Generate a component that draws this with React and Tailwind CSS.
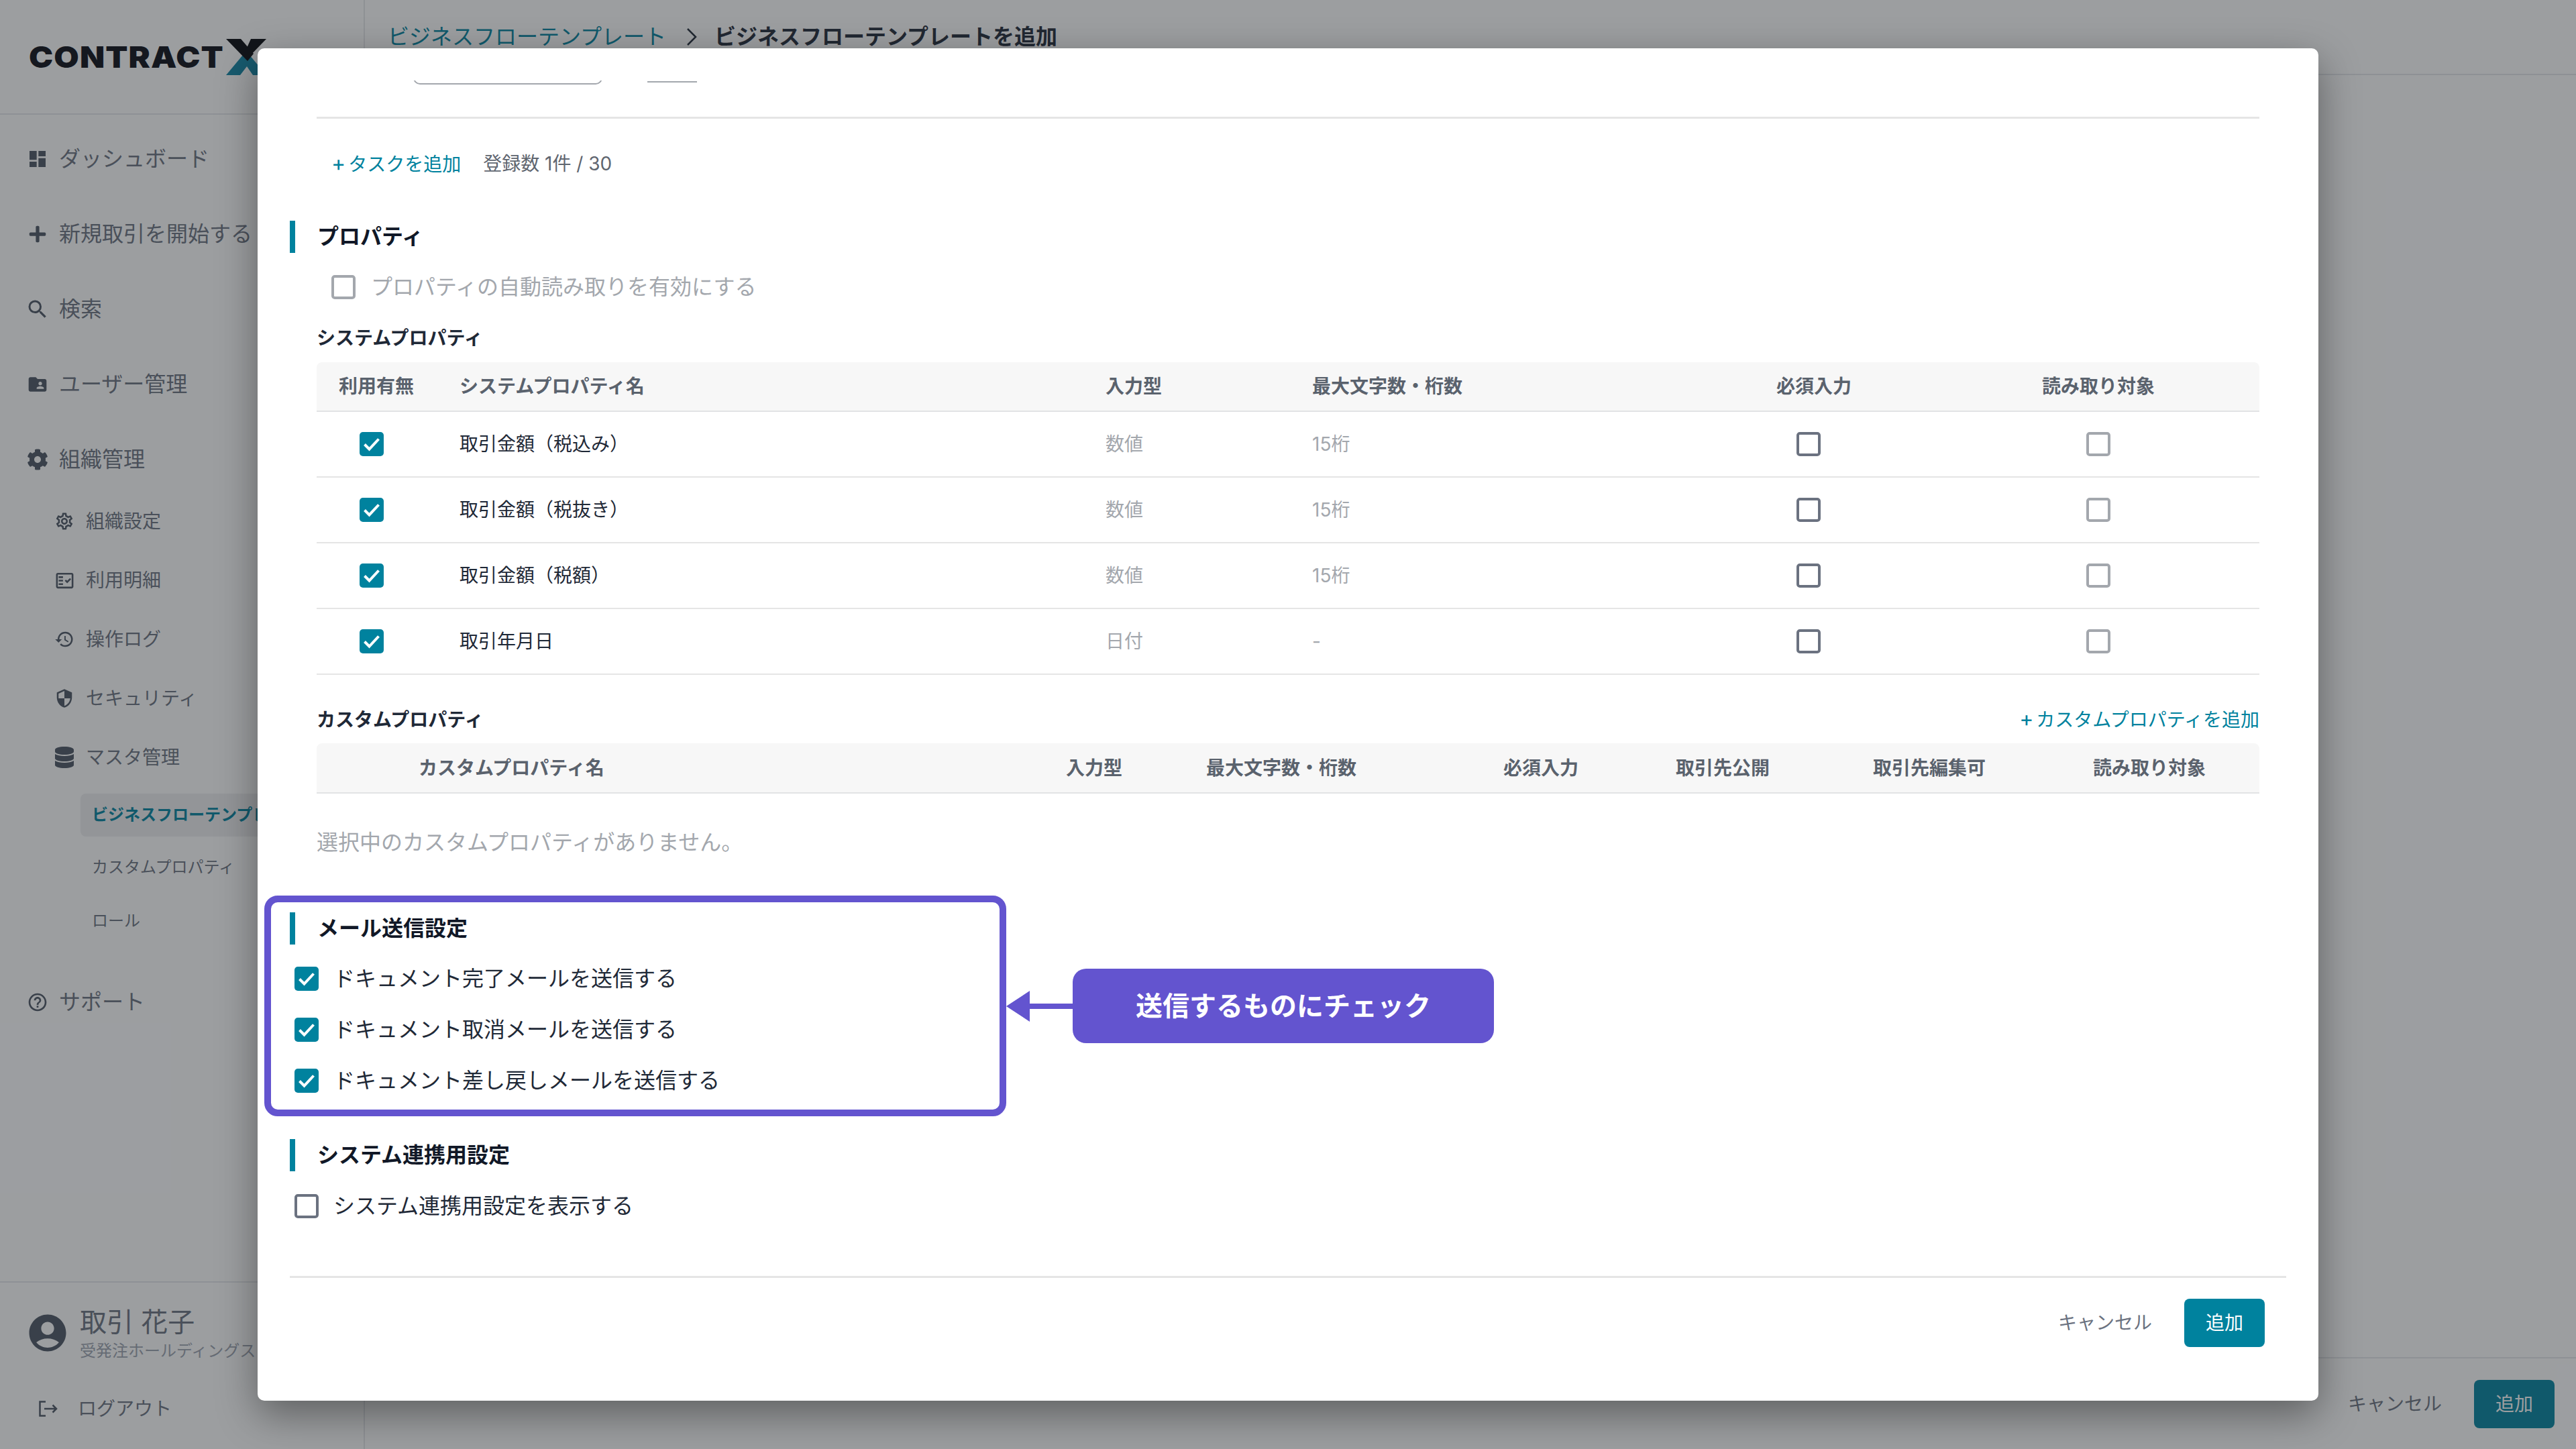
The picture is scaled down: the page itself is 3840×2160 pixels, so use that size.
import React from "react";
import { MdDashboard, MdSearch, MdFolderShared, MdOutlineSettings, MdOutlineFactCheck, MdHistory, MdSecurity, MdHelpOutline, MdAccountCircle } from "react-icons/md";
import { FaPlus, FaCog, FaDatabase } from "react-icons/fa";

function Check({ on, light, className = "" }) {
  if (on) {
    return (
      <div className={"w-[36px] h-[36px] shrink-0 rounded-[5px] bg-[#00829e] flex items-center justify-center " + className}>
        <svg width="36" height="36" viewBox="0 0 36 36" fill="none">
          <path d="M7.5 18.5 L14.5 25.5 L28.5 10.5" stroke="#fff" strokeWidth="4" />
        </svg>
      </div>
    );
  }
  return (
    <div className={"w-[36px] h-[36px] shrink-0 rounded-[5px] border-[4px] bg-white " + (light ? "border-[#a3a7ad] " : "border-[#6b7280] ") + className} />
  );
}

function SectionTitle({ children, className = "" }) {
  return (
    <div className={"flex h-[48px] items-center ml-[48px] " + className}>
      <div className="w-[8px] h-[48px] bg-[#00829e]" />
      <div className="ml-[33px] text-[32px] font-bold text-[#111827] leading-none">{children}</div>
    </div>
  );
}

function Plus() {
  return <span className="text-[32px] leading-none mr-[4px]">+</span>;
}

const topItems = [
  { t: "ダッシュボード", i: <MdDashboard size={32} /> },
  { t: "新規取引を開始する", i: <FaPlus size={28} /> },
  { t: "検索", i: <MdSearch size={36} /> },
  { t: "ユーザー管理", i: <MdFolderShared size={32} /> },
];
const subItems = [
  { t: "組織設定", i: <MdOutlineSettings size={30} /> },
  { t: "利用明細", i: <MdOutlineFactCheck size={31} /> },
  { t: "操作ログ", i: <MdHistory size={30} /> },
  { t: "セキュリティ", i: <MdSecurity size={30} /> },
  { t: "マスタ管理", i: <FaDatabase size={32} /> },
];

function Sidebar() {
  return (
    <aside className="w-[544px] h-full shrink-0 flex flex-col border-r-2 border-[#e5e7eb]">
      <div className="h-[171px] shrink-0 border-b-2 border-[#e5e7eb] flex items-center pl-[43px]">
        <span className="w-[294px] text-[44px] font-black tracking-[1px] text-[#0a0c14] leading-none origin-left scale-x-[1.1] whitespace-nowrap [font-family:Inter,sans-serif]">CONTRACT</span>
        <svg width="60" height="54" viewBox="0 0 60 54" className="shrink-0">
          <polygon points="0,54 30,18 60,54 40,54 31,41 21,54" fill="#0f84a4" />
          <polygon points="0,0 22,0 41,22 32,33" fill="#05060c" />
          <polygon points="37,0 60,0 32,29 27,22" fill="#05060c" />
        </svg>
      </div>
      <nav className="flex-1 flex flex-col pt-[10px] text-[#6b7280]">
        {topItems.map((it) => (
          <div key={it.t} className="h-[112px] flex items-center text-[32px]">
            <div className="w-[88px] flex justify-center pl-[24px] text-[#4b5563]">{it.i}</div>
            <span className="whitespace-nowrap">{it.t}</span>
          </div>
        ))}
        <div className="mt-[8px] h-[96px] flex items-center text-[32px]">
          <div className="w-[88px] flex justify-center pl-[24px] text-[#4b5563]"><FaCog size={32} /></div>
          <span>組織管理</span>
        </div>
        {subItems.map((it) => (
          <div key={it.t} className="h-[88px] flex items-center text-[28px]">
            <div className="w-[128px] flex justify-center pl-[64px] text-[#4b5563]">{it.i}</div>
            <span className="whitespace-nowrap">{it.t}</span>
          </div>
        ))}
        <div className="mt-[10px] ml-[120px] mr-[24px] h-[64px] rounded-[8px] bg-[#eeeff1] flex items-center pl-[17px] text-[24px] font-bold text-[#00829e] whitespace-nowrap overflow-hidden">ビジネスフローテンプレート</div>
        <div className="mt-[6px] h-[80px] flex items-center pl-[137px] text-[24px]">カスタムプロパティ</div>
        <div className="h-[80px] flex items-center pl-[137px] text-[24px]">ロール</div>
        <div className="mt-[25px] h-[112px] flex items-center text-[32px]">
          <div className="w-[88px] flex justify-center pl-[24px] text-[#4b5563]"><MdHelpOutline size={32} /></div>
          <span>サポート</span>
        </div>
      </nav>
      <div className="h-[250px] shrink-0 border-t-2 border-[#e5e7eb] flex flex-col">
        <div className="mt-[33px] flex items-center pl-[38px]">
          <MdAccountCircle size={66} className="text-[#4b5563]" />
          <div className="ml-[15px] flex flex-col">
            <span className="text-[40px] leading-[52px] text-[#6b7280] whitespace-nowrap">取引 花子</span>
            <span className="text-[24px] leading-[30px] mt-[2px] text-[#9ca3af] whitespace-nowrap">受発注ホールディングス</span>
          </div>
        </div>
        <div className="mt-[50px] flex items-center pl-[58px]">
          <svg width="28" height="24" viewBox="0 0 28 24" fill="none" stroke="#4b5563" strokeWidth="2.5" className="shrink-0">
            <path d="M10 1.5 H1.5 V22.5 H10" />
            <path d="M8 12 H26 M20.5 6.5 L26 12 L20.5 17.5" />
          </svg>
          <span className="ml-[30px] text-[28px] text-[#6b7280]">ログアウト</span>
        </div>
      </div>
    </aside>
  );
}

function Main() {
  return (
    <main className="flex-1 h-full flex flex-col">
      <header className="h-[112px] shrink-0 border-b-2 border-[#e5e7eb] flex items-center pl-[34px] text-[32px]">
        <span className="text-[#00829e]">ビジネスフローテンプレート</span>
        <svg width="16" height="26" viewBox="0 0 16 26" fill="none" className="ml-[30px] mr-[26px]">
          <path d="M2 1 L14 13 L2 25" stroke="#1f2937" strokeWidth="2.5" />
        </svg>
        <span className="font-bold text-[#1f2937]">ビジネスフローテンプレートを追加</span>
      </header>
      <div className="flex-1" />
      <footer className="h-[137px] shrink-0 border-t-2 border-[#e5e7eb] flex items-center justify-end pr-[32px] text-[28px]">
        <span className="text-[#6b7280] mr-[48px]">キャンセル</span>
        <div className="w-[120px] h-[72px] rounded-[8px] bg-[#00829e] text-white flex items-center justify-center">追加</div>
      </footer>
    </main>
  );
}

const sysRows = [
  ["取引金額（税込み）", "数値", "15桁"],
  ["取引金額（税抜き）", "数値", "15桁"],
  ["取引金額（税額）", "数値", "15桁"],
  ["取引年月日", "日付", "-"],
];

function SystemTable() {
  return (
    <div className="text-[28px] mt-[16px]">
      <div className="h-[74px] rounded-t-[8px] bg-[#f7f7f7] border-b-2 border-[#e2e3e5] grid grid-cols-[213px_963px_308px_644px_288px_480px] items-center font-bold text-[#5a626d]">
        <span className="pl-[33px]">利用有無</span>
        <span>システムプロパティ名</span>
        <span>入力型</span>
        <span>最大文字数・桁数</span>
        <span className="pl-[48px]">必須入力</span>
        <span className="text-center">読み取り対象</span>
      </div>
      {sysRows.map((r) => (
        <div key={r[0]} className="h-[98px] border-b-2 border-[#e5e5e5] grid grid-cols-[213px_963px_308px_644px_288px_480px] items-center">
          <Check on className="ml-[64px]" />
          <span className="text-[#1f2937]">{r[0]}</span>
          <span className="text-[#a3a7ad]">{r[1]}</span>
          <span className="text-[#a3a7ad]">{r[2]}</span>
          <Check className="ml-[78px]" />
          <Check light className="justify-self-center" />
        </div>
      ))}
    </div>
  );
}

function Modal() {
  return (
    <div className="absolute left-[384px] top-[72px] w-[3072px] h-[2016px] bg-white rounded-[10px] overflow-hidden shadow-[0_20px_60px_rgba(0,0,0,0.4)]">
      <div className="h-[54px] pt-[48px] pl-[232px]">
        <div className="h-[6px] flex items-end overflow-hidden">
          <div className="w-[282px] h-[40px] rounded-[10px] border-2 border-[#a3a7ad] shrink-0" />
          <div className="ml-[67px] mb-[3px] w-[74px] h-[2px] bg-[#a3a7ad]" />
        </div>
      </div>
      <div className="mx-[88px] mt-[48px] h-[3px] bg-[#e5e5e5]" />
      <div className="h-[40px] mt-[47px] ml-[110px] flex items-center text-[28px] leading-none">
        <span className="text-[#00829e]"><Plus />タスクを追加</span>
        <span className="ml-[33px] text-[#5f6670]">登録数 1件 / 30</span>
      </div>
      <SectionTitle className="mt-[65px]">プロパティ</SectionTitle>
      <div className="mt-[33px] ml-[110px] flex items-center h-[36px]">
        <Check light />
        <span className="ml-[23px] text-[32px] text-[#a3a7ad] leading-none">プロパティの自動読み取りを有効にする</span>
      </div>
      <div className="mx-[88px]">
        <div className="mt-[38px] h-[40px] flex items-center text-[28px] font-bold text-[#1f2937]">システムプロパティ</div>
        <SystemTable />
        <div className="mt-[47px] h-[40px] flex items-center justify-between text-[28px]">
          <span className="font-bold text-[#1f2937]">カスタムプロパティ</span>
          <span className="text-[#00829e]"><Plus />カスタムプロパティを追加</span>
        </div>
        <div className="mt-[15px] h-[75px] rounded-t-[8px] bg-[#f7f7f7] border-b-2 border-[#e2e3e5] pl-[152px] grid grid-cols-[965px_209px_443px_257px_294px_328px_1fr] items-center text-[28px] font-bold text-[#5a626d]">
          <span>カスタムプロパティ名</span>
          <span>入力型</span>
          <span>最大文字数・桁数</span>
          <span>必須入力</span>
          <span>取引先公開</span>
          <span>取引先編集可</span>
          <span>読み取り対象</span>
        </div>
        <div className="mt-[49px] h-[48px] flex items-center text-[32px] text-[#a3a7ad]">選択中のカスタムプロパティがありません。</div>
      </div>
      <SectionTitle className="mt-[80px]">メール送信設定</SectionTitle>
      <div className="mt-[33px] ml-[55px] flex flex-col gap-[40px]">
        {["ドキュメント完了メールを送信する", "ドキュメント取消メールを送信する", "ドキュメント差し戻しメールを送信する"].map((t) => (
          <div key={t} className="h-[36px] flex items-center">
            <Check on />
            <span className="ml-[22px] text-[32px] text-[#1f2937] leading-none">{t}</span>
          </div>
        ))}
      </div>
      <SectionTitle className="mt-[69px]">システム連携用設定</SectionTitle>
      <div className="mt-[34px] ml-[55px] h-[36px] flex items-center">
        <Check />
        <span className="ml-[22px] text-[32px] text-[#1f2937] leading-none">システム連携用設定を表示する</span>
      </div>
      <div className="mt-[86px] mx-[48px] border-t-[3px] border-[#e5e5e5] pt-[31px] pr-[32px] flex items-center justify-end text-[28px]">
        <span className="text-[#6b7280] mr-[48px]">キャンセル</span>
        <div className="w-[120px] h-[72px] rounded-[8px] bg-[#00829e] text-white flex items-center justify-center">追加</div>
      </div>
    </div>
  );
}

function Annotation() {
  return (
    <>
      <div className="absolute left-[394px] top-[1335px] w-[1106px] h-[329px] rounded-[20px] border-[10px] border-[#6354cf]" />
      <div className="absolute left-[1500px] top-[1444px] h-[111px] flex items-center">
        <svg width="99" height="46" viewBox="0 0 99 46" className="shrink-0">
          <polygon points="0,23 35,0 35,19 99,19 99,27 35,27 35,46" fill="#6354cf" />
        </svg>
        <div className="w-[628px] h-[111px] rounded-[20px] bg-[#6354cf] text-white text-[40px] font-bold flex items-center justify-center">送信するものにチェック</div>
      </div>
    </>
  );
}

export default function App() {
  return (
    <div className="relative w-[3840px] h-[2160px] overflow-hidden bg-white flex [font-family:Inter,'Noto_Sans_CJK_JP',sans-serif]">
      <Sidebar />
      <Main />
      <div className="absolute inset-0 bg-[#23272d]/45" />
      <Modal />
      <Annotation />
    </div>
  );
}
